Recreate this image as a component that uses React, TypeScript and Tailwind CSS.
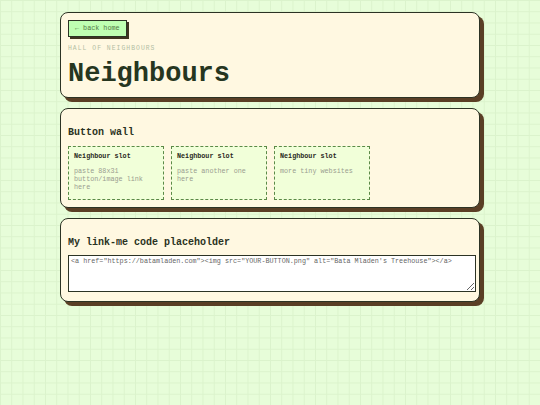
export default function App() {
  const mono = { fontFamily: '"Courier New", "Liberation Mono", monospace' };
  const slots = [
    { title: "Neighbour slot", body: "paste 88x31 button/image link here" },
    { title: "Neighbour slot", body: "paste another one here" },
    { title: "Neighbour slot", body: "more tiny websites" },
  ];
  const card =
    "rounded-[8px] border-[1.5px] border-[#2c3324] bg-[#fff8e1] shadow-[4px_4px_0_#5a3f25]";
  return (
    <div
      className="min-h-[405px] w-full bg-[#e7fdd9] bg-[linear-gradient(to_right,#dbf3cc_1px,transparent_1px),linear-gradient(to_bottom,#dbf3cc_1px,transparent_1px)] bg-[size:11.25px_11.25px]"
      style={mono}
    >
      <div className="mx-auto flex w-[420px] flex-col gap-[10px] pt-[12px]">
        <section className={`${card} px-[7px] pt-[7px] pb-[8px]`}>
          <a className="block w-fit border-[1.5px] border-[#2c3324] bg-[#bfffb2] px-[6px] py-[3px] text-[6.75px] leading-[9px] text-[#557a46] shadow-[2px_2px_0_#3f3420]">
            ← back home
          </a>
          <div className="mt-[8px] text-[6.4px] leading-[8px] tracking-[0.16em] text-[#b3bea3]">
            HALL OF NEIGHBOURS
          </div>
          <h1 className="mt-[6px] text-[27px] leading-[30px] font-bold text-[#26361f]">
            Neighbours
          </h1>
        </section>

        <section className={`${card} px-[7px] pt-[18px] pb-[7px]`}>
          <h2 className="text-[10px] leading-[12px] font-bold text-[#2a3222]">
            Button wall
          </h2>
          <div className="mt-[7px] flex gap-[7px]">
            {slots.map((s, i) => (
              <div
                key={i}
                className="h-[54px] w-[96px] border border-dashed border-[#5b8a47] bg-[#f1ffd9] px-[5px] pt-[5px]"
              >
                <div className="text-[6.75px] leading-[8px] font-bold text-[#2a2a22]">
                  {s.title}
                </div>
                <div className="mt-[7px] text-[6.75px] leading-[8px] text-[#9a9d90]">
                  {s.body}
                </div>
              </div>
            ))}
          </div>
        </section>

        <section className={`${card} px-[7px] pt-[18px] pb-[9px]`}>
          <h2 className="text-[10px] leading-[12px] font-bold text-[#2a3222]">
            My link-me code placeholder
          </h2>
          <textarea
            readOnly
            className="mt-[6px] block h-[37px] w-[408px] resize border-[1.5px] border-[#2c3324] bg-white px-[2px] py-[1px] text-[6.75px] leading-[8px] text-[#666] outline-none"
            style={mono}
            defaultValue={`<a href="https://batamladen.com"><img src="YOUR-BUTTON.png" alt="Bata Mladen's Treehouse"></a>`}
          />
        </section>
      </div>
    </div>
  );
}
